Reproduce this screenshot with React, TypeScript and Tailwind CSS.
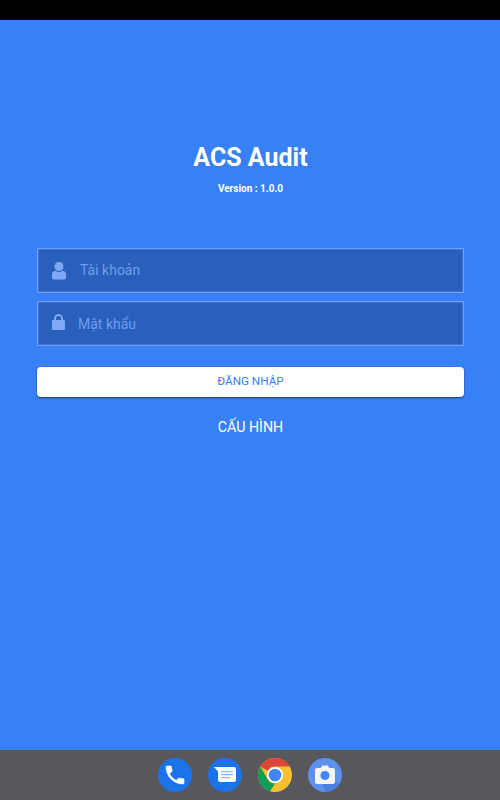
function UserGlyph() {
  return (
    <svg width="16" height="18" viewBox="0 0 16 18" className="-ml-[1px] fill-[#7ea9f8]">
      <circle cx="8" cy="4.500" r="4.500" />
      <path d="M1 15.500V12.500C1 10.200 2.600 8.800 4.500 8.800C5.500 9.600 6.700 10 8 10C9.300 10 10.500 9.600 11.500 8.800C13.400 8.800 15 10.200 15 12.500V15.500C15 16.600 14.200 17.500 13 17.500H3C1.800 17.500 1 16.600 1 15.500Z" />
    </svg>
  );
}

function LockGlyph() {
  return (
    <svg width="13" height="16" viewBox="0 0 13 16" className="mb-[3px] fill-[#7ea9f8]">
      <path fillRule="evenodd" d="M2 6V4.500A4.500 4.500 0 0 1 11 4.500V6H11.700C12.400 6 13 6.600 13 7.300V14.700C13 15.400 12.400 16 11.700 16H1.300C.6 16 0 15.400 0 14.700V7.300C0 6.600 .6 6 1.300 6H2ZM4 6H9V4.500A2.500 2.500 0 0 0 4 4.500V6Z" />
    </svg>
  );
}

function PhoneIcon() {
  return (
    <div className="flex h-[34px] w-[34px] items-center justify-center rounded-full bg-[#1a73e8]">
      <svg width="24" height="24" viewBox="0 0 24 24" fill="#ffffff" stroke="#ffffff" strokeWidth="0.6">
        <path d="M6.600 10.800c1.400 2.800 3.800 5.100 6.600 6.600l2.200-2.200c.3-.3.700-.4 1-.2 1.100.4 2.300.6 3.600.6.600 0 1 .4 1 1V20c0 .6-.4 1-1 1C10.600 21 3 13.400 3 4c0-.6.400-1 1-1h3.500c.6 0 1 .4 1 1 0 1.300.2 2.500.6 3.600.1.300 0 .7-.2 1l-2.300 2.200z" />
      </svg>
    </div>
  );
}

function MessagesIcon() {
  return (
    <div className="flex h-[34px] w-[34px] items-center justify-center rounded-full bg-[#1a73e8]">
      <svg width="24" height="22" viewBox="0 0 24 22">
        <path d="M1 3H21C22.100 3 23 3.900 23 5V16C23 17.100 22.100 18 21 18H7C5.900 18 5 17.100 5 16V7.500L1 3Z" fill="#ffffff" />
        <path d="M8 7H20V8.300H8ZM8 10H20V11.300H8ZM8 13H17V14.300H8Z" fill="#8ab4f8" />
      </svg>
    </div>
  );
}

function ChromeIcon() {
  return (
    <svg width="34" height="34" viewBox="0 0 34 34">
      <circle cx="17" cy="17" r="17" fill="#fbc02d" />
      <path d="M17 0A17 17 0 0 1 31.700 8.500H17A8.500 8.500 0 0 0 9.600 12.800L2.300 8.500A17 17 0 0 1 17 0Z" fill="#db4437" />
      <path d="M2.300 8.500L9.600 21.200A8.500 8.500 0 0 0 17 25.500L12 33.300A17 17 0 0 1 2.300 8.500Z" fill="#0f9d58" />
      <circle cx="17" cy="17" r="8" fill="#ffffff" />
      <circle cx="17" cy="17" r="6.300" fill="#4285f4" />
    </svg>
  );
}

function CameraIcon() {
  return (
    <svg width="34" height="34" viewBox="0 0 34 34">
      <circle cx="17" cy="17" r="17" fill="#5c91ee" />
      <path d="M17 12L31 26A17 17 0 0 1 17 34L14 25Z" fill="#4a7fdf" />
      <path d="M9 10H12.500L14.500 7.500H19.500L21.500 10H25C26.100 10 27 10.900 27 12V24C27 25.100 26.100 26 25 26H9C7.900 26 7 25.100 7 24V12C7 10.900 7.900 10 9 10Z" fill="#f5f5f5" />
      <circle cx="17" cy="17.500" r="4.500" fill="#4285f4" />
    </svg>
  );
}

function Field({ icon, label, textClass }: { icon: React.ReactNode; label: string; textClass: string }) {
  return (
    <div className="flex h-[45px] items-center border border-[#6d9ff8] bg-[#2a60bb] pl-[14px] shadow-[inset_0_0_0_1px_#4174d2]">
      {icon}
      <span className={`text-[14px] text-[#6f9df0] ${textClass}`}>{label}</span>
    </div>
  );
}

export default function App() {
  return (
    <div className="flex h-[800px] w-[500px] flex-col bg-[#3880f6] font-['Roboto',sans-serif]">
      <div className="h-[20px] bg-black" />
      <main className="flex flex-1 flex-col pr-[36px] pl-[37px]">
        <h1 className="mt-[123px] text-center text-[25px] leading-[30px] font-bold text-white">ACS Audit</h1>
        <p className="mt-[9px] text-center text-[10px] leading-[14px] font-bold text-white">Version : 1.0.0</p>
        <div className="mt-[52px] flex flex-col gap-[8px]">
          <Field icon={<UserGlyph />} label="Tài khoản" textClass="ml-[13px]" />
          <Field icon={<LockGlyph />} label="Mật khẩu" textClass="mt-[2px] ml-[13px]" />
        </div>
        <button
          type="button"
          className="mt-[21px] h-[30px] rounded-[4px] bg-white text-[11.7px] text-[#3880f6] shadow-[0_1px_2px_rgba(0,0,0,0.55)]"
        >
          ĐĂNG NHẬP
        </button>
        <p className="mt-[20px] text-center text-[14.2px] leading-[20px] text-white">CẤU HÌNH</p>
      </main>
      <footer className="flex h-[50px] items-center justify-center gap-[16px] bg-[#58585c]">
        <PhoneIcon />
        <MessagesIcon />
        <ChromeIcon />
        <CameraIcon />
      </footer>
    </div>
  );
}
